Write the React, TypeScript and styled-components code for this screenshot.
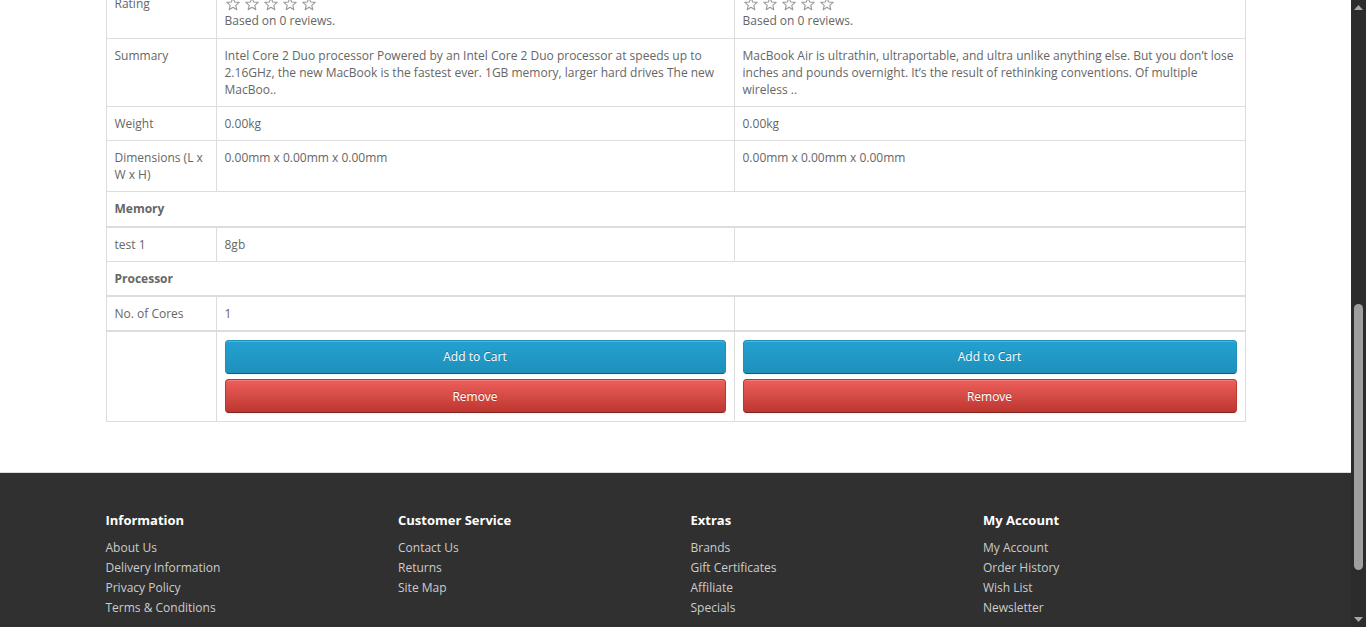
import React, { useLayoutEffect, useRef, useState } from 'react';
import styled, { createGlobalStyle, css } from 'styled-components';

const GlobalStyle = createGlobalStyle`
  html, body { margin: 0; padding: 0; overflow: hidden; }
  *, *::before, *::after { box-sizing: border-box; }
  body {
    font-family: 'Open Sans', 'Noto Sans', sans-serif;
    font-size: 12px;
    line-height: 1.42857143;
    color: #666;
    background: #fff;
  }
`;

const SUMMARY_ROW_TOP = 38;

const Screen = styled.div`
  display: flex;
  width: 100%;
  height: 627px;
  overflow: hidden;
`;

const Viewport = styled.div`
  flex: 1;
  min-width: 0;
  height: 100%;
  overflow: hidden;
`;

const Scrollbar = styled.div`
  flex: none;
  width: 15px;
  display: flex;
  flex-direction: column;
  background: #2c2c2c;
`;

const ScrollArrow = styled.div`
  flex: none;
  height: 15px;
  display: flex;
  align-items: center;
  justify-content: center;
`;

const ScrollTrack = styled.div`
  flex: 1;
  min-height: 0;
`;

const ScrollThumb = styled.div`
  margin-left: 3px;
  width: 9px;
  border-radius: 5px;
  background: #9f9f9f;
`;

const Container = styled.div`
  width: 1170px;
  padding: 0 15px;
  margin: 0 auto;
`;

const ContentContainer = styled(Container)`
  display: flow-root;
`;

/* ---------- header part (scrolled out of view) ---------- */

const TopNav = styled.nav`
  height: 40px;
  margin-bottom: 20px;
  background: #eee;
  border-bottom: 1px solid #e2e2e2;
`;

const TopNavInner = styled(Container)`
  display: flex;
  justify-content: flex-end;
  align-items: center;
  height: 100%;
  gap: 16px;
  color: #888;
`;

const SiteHeader = styled.header`
  height: 124px;
`;

const HeaderInner = styled(Container)`
  display: flex;
  align-items: center;
  justify-content: space-between;
  height: 100%;
  gap: 30px;
`;

const Logo = styled.div`
  font-size: 30px;
  font-weight: 700;
  color: #229ac8;
`;

const Search = styled.div`
  flex: 1;
  height: 40px;
  border: 1px solid #ccc;
  border-radius: 4px;
  padding: 10px 16px;
  color: #999;
  font-size: 14px;
`;

const CartButton = styled.div`
  height: 40px;
  padding: 10px 16px;
  border-radius: 4px;
  background: #363636;
  color: #fff;
`;

const Menu = styled.nav`
  height: 40px;
  margin-bottom: 20px;
  border-radius: 4px;
  background: linear-gradient(to bottom, #23a1d1, #1f90bb);
  display: flex;
  align-items: center;
  gap: 22px;
  padding: 0 15px;
  color: #fff;
  font-weight: 700;
`;

const Breadcrumb = styled.ul`
  list-style: none;
  margin: 0 0 20px;
  padding: 8px 15px;
  border: 1px solid #ddd;
  background: #f5f5f5;
  border-radius: 4px;
  display: flex;
  gap: 18px;
  & a { color: #23a1d1; text-decoration: none; }
`;

const PageTitle = styled.h1`
  margin: 0 0 10px;
  font-size: 33px;
  font-weight: 400;
  line-height: 1.1;
  color: #444;
`;

/* ---------- compare table ---------- */

const CompareTable = styled.table`
  width: 100%;
  table-layout: fixed;
  border-collapse: collapse;
  border-spacing: 0;
  margin-bottom: 20px;
  border: 1px solid #ddd;
`;

const Col = styled.col<{ $w?: number }>`
  ${p => p.$w && css`width: ${p.$w}px;`}
`;

const RowGroup = styled.tbody<{ $separated?: boolean }>`
  ${p => p.$separated && css`border-top: 2px solid #ddd;`}
`;

const Row = styled.tr``;

const Cell = styled.td<{ $group?: boolean }>`
  padding: 8px;
  vertical-align: top;
  border: 1px solid #ddd;
  line-height: 1.42857143;
  ${p => p.$group && css`border-bottom-width: 2px;`}
`;

const ProductLink = styled.a`
  color: #23a1d1;
  font-weight: 700;
  text-decoration: none;
`;

const Thumbnail = styled.div`
  width: 100px;
  height: 100px;
  padding: 4px;
  border: 1px solid #ddd;
  border-radius: 4px;
  background: #fff;
`;

const ThumbInner = styled.div`
  width: 100%;
  height: 100%;
  background: #f2f2f2;
`;

const StarsLine = styled.div`
  display: flex;
  align-items: center;
  gap: 3px;
  height: 17.14px;
`;

const StarSlot = styled.span`
  width: 16px;
  display: flex;
  justify-content: center;
`;

const Button = styled.button<{ $variant: 'primary' | 'danger' }>`
  display: block;
  width: 100%;
  margin: 0;
  padding: 7.5px 12px;
  font-family: inherit;
  font-size: 12px;
  line-height: 1.42857143;
  color: #fff;
  text-align: center;
  text-decoration: none;
  border: 1px solid;
  border-radius: 4px;
  text-shadow: 0 -1px 0 rgba(0, 0, 0, 0.25);
  box-shadow: inset 0 1px 0 rgba(255, 255, 255, 0.2), 0 1px 2px rgba(0, 0, 0, 0.05);
  cursor: pointer;
  & + & { margin-top: 5px; }
  ${p =>
    p.$variant === 'primary'
      ? css`
          background-color: #229ac8;
          background-image: linear-gradient(to bottom, #23a1d1, #1f90bb);
          border-color: #1f90bb #1f90bb #145e7a;
        `
      : css`
          background-color: #da4f49;
          background-image: linear-gradient(to bottom, #ee5f5b, #bd362f);
          border-color: #bd362f #bd362f #802420;
        `}
`;

/* ---------- footer ---------- */

const Footer = styled.footer`
  margin-top: 30px;
  padding-top: 30px;
  padding-bottom: 31px;
  background: #303030;
  border-top: 1px solid #ddd;
  color: #e2e2e2;
`;

const FooterGrid = styled.div`
  display: grid;
  grid-template-columns: repeat(4, 1fr);
  margin: 0 -15px;
`;

const FooterColumn = styled.div`
  padding: 0 15px;
`;

const FooterHeading = styled.h5`
  margin: 10px 0;
  font-size: 13px;
  font-weight: 700;
  line-height: 1.1;
  color: #fff;
`;

const LinkList = styled.ul`
  list-style: none;
  margin: 0 0 10px;
  padding: 0;
`;

const LinkItem = styled.li`
  line-height: 20px;
`;

const FooterLink = styled.a`
  color: #ccc;
  text-decoration: none;
`;

const FooterRule = styled.hr`
  margin: 20px 0;
  border: none;
  border-bottom: 1px solid #666;
`;

const Powered = styled.p`
  margin: 0 0 10px;
  color: #ccc;
`;

const Star = () => (
  <svg width="14" height="14" viewBox="0 0 14 14" aria-hidden="true">
    <polygon
      points="7,0.9 8.7,5.05 13.18,5.39 9.76,8.3 10.82,12.66 7,10.3 3.18,12.66 4.24,8.3 0.82,5.39 5.3,5.05"
      fill="none"
      stroke="#999"
      strokeWidth="1.1"
      strokeLinejoin="round"
    />
  </svg>
);

const Rating = () => (
  <>
    <StarsLine>
      {[0, 1, 2, 3, 4].map(i => (
        <StarSlot key={i}>
          <Star />
        </StarSlot>
      ))}
    </StarsLine>
    Based on 0 reviews.
  </>
);

const Arrow = ({ dir }: { dir: 'up' | 'down' }) => (
  <svg width="9" height="5" viewBox="0 0 9 5" aria-hidden="true">
    <polygon points={dir === 'up' ? '4.5,0 9,5 0,5' : '0,0 9,0 4.5,5'} fill="#a6a6a6" />
  </svg>
);

const products = [
  {
    name: 'MacBook',
    price: '$602.00',
    model: 'Product 16',
    brand: 'Apple',
    availability: 'Out Of Stock',
    summary:
      'Intel Core 2 Duo processor Powered by an Intel Core 2 Duo processor at speeds up to 2.16GHz, the new MacBook is the fastest ever. 1GB memory, larger hard drives The new MacBoo..',
    memory: '8gb',
    cores: '1',
  },
  {
    name: 'MacBook Air',
    price: '$1,202.00',
    model: 'Product 17',
    brand: 'Apple',
    availability: 'In Stock',
    summary:
      'MacBook Air is ultrathin, ultraportable, and ultra unlike anything else. But you don\u2019t lose inches and pounds overnight. It\u2019s the result of rethinking conventions. Of multiple wireless ..',
    memory: '',
    cores: '',
  },
];

const footerColumns = [
  { title: 'Information', links: ['About Us', 'Delivery Information', 'Privacy Policy', 'Terms & Conditions'] },
  { title: 'Customer Service', links: ['Contact Us', 'Returns', 'Site Map'] },
  { title: 'Extras', links: ['Brands', 'Gift Certificates', 'Affiliate', 'Specials'] },
  { title: 'My Account', links: ['My Account', 'Order History', 'Wish List', 'Newsletter'] },
];

const menuItems = ['Desktops', 'Laptops & Notebooks', 'Components', 'Tablets', 'Software', 'Phones & PDAs', 'Cameras', 'MP3 Players'];

export default function App() {
  const viewportRef = useRef<HTMLDivElement>(null);
  const anchorRef = useRef<HTMLTableRowElement>(null);
  const [thumb, setThumb] = useState({ top: 0, height: 0 });

  useLayoutEffect(() => {
    const place = () => {
      const vp = viewportRef.current;
      const anchor = anchorRef.current;
      if (!vp || !anchor) return;
      const offset = anchor.getBoundingClientRect().top - vp.getBoundingClientRect().top + vp.scrollTop;
      vp.scrollTop = offset - SUMMARY_ROW_TOP;
      const track = vp.clientHeight - 30;
      setThumb({
        top: (vp.scrollTop / vp.scrollHeight) * track,
        height: (vp.clientHeight / vp.scrollHeight) * track,
      });
    };
    place();
    if (document.fonts && document.fonts.ready) document.fonts.ready.then(place);
  }, []);

  return (
    <>
      <GlobalStyle />
      <Screen>
        <Viewport ref={viewportRef}>
          <TopNav>
            <TopNavInner>
              <span>123456789</span>
              <span>My Account</span>
              <span>Wish List (0)</span>
              <span>Shopping Cart</span>
              <span>Checkout</span>
            </TopNavInner>
          </TopNav>
          <SiteHeader>
            <HeaderInner>
              <Logo>Your Store</Logo>
              <Search>Search</Search>
              <CartButton>0 item(s) - $0.00</CartButton>
            </HeaderInner>
          </SiteHeader>
          <ContentContainer>
            <Menu>
              {menuItems.map(m => (
                <span key={m}>{m}</span>
              ))}
            </Menu>
            <Breadcrumb>
              <li><a href="#">Home</a></li>
              <li><a href="#">Product Comparison</a></li>
            </Breadcrumb>
            <PageTitle>Product Comparison</PageTitle>
            <CompareTable>
              <colgroup>
                <Col $w={110} />
                <Col $w={518} />
                <Col />
              </colgroup>
              <RowGroup>
                <Row>
                  <Cell colSpan={3} $group>
                    <strong>Product Details</strong>
                  </Cell>
                </Row>
              </RowGroup>
              <RowGroup>
                <Row>
                  <Cell>Product</Cell>
                  {products.map(p => (
                    <Cell key={p.name}>
                      <ProductLink href="#">{p.name}</ProductLink>
                    </Cell>
                  ))}
                </Row>
                <Row>
                  <Cell>Image</Cell>
                  {products.map(p => (
                    <Cell key={p.name}>
                      <Thumbnail>
                        <ThumbInner />
                      </Thumbnail>
                    </Cell>
                  ))}
                </Row>
                <Row>
                  <Cell>Price</Cell>
                  {products.map(p => (
                    <Cell key={p.name}>{p.price}</Cell>
                  ))}
                </Row>
                <Row>
                  <Cell>Model</Cell>
                  {products.map(p => (
                    <Cell key={p.name}>{p.model}</Cell>
                  ))}
                </Row>
                <Row>
                  <Cell>Brand</Cell>
                  {products.map(p => (
                    <Cell key={p.name}>{p.brand}</Cell>
                  ))}
                </Row>
                <Row>
                  <Cell>Availability</Cell>
                  {products.map(p => (
                    <Cell key={p.name}>{p.availability}</Cell>
                  ))}
                </Row>
                <Row>
                  <Cell>Rating</Cell>
                  {products.map(p => (
                    <Cell key={p.name}>
                      <Rating />
                    </Cell>
                  ))}
                </Row>
                <Row ref={anchorRef}>
                  <Cell>Summary</Cell>
                  {products.map(p => (
                    <Cell key={p.name}>{p.summary}</Cell>
                  ))}
                </Row>
                <Row>
                  <Cell>Weight</Cell>
                  {products.map(p => (
                    <Cell key={p.name}>0.00kg</Cell>
                  ))}
                </Row>
                <Row>
                  <Cell>Dimensions (L x W x H)</Cell>
                  {products.map(p => (
                    <Cell key={p.name}>0.00mm x 0.00mm x 0.00mm</Cell>
                  ))}
                </Row>
              </RowGroup>
              <RowGroup>
                <Row>
                  <Cell colSpan={3} $group>
                    <strong>Memory</strong>
                  </Cell>
                </Row>
              </RowGroup>
              <RowGroup>
                <Row>
                  <Cell>test 1</Cell>
                  {products.map(p => (
                    <Cell key={p.name}>{p.memory}</Cell>
                  ))}
                </Row>
              </RowGroup>
              <RowGroup>
                <Row>
                  <Cell colSpan={3} $group>
                    <strong>Processor</strong>
                  </Cell>
                </Row>
              </RowGroup>
              <RowGroup>
                <Row>
                  <Cell>No. of Cores</Cell>
                  {products.map(p => (
                    <Cell key={p.name}>{p.cores}</Cell>
                  ))}
                </Row>
              </RowGroup>
              <RowGroup $separated>
                <Row>
                  <Cell />
                  {products.map(p => (
                    <Cell key={p.name}>
                      <Button type="button" $variant="primary">
                        Add to Cart
                      </Button>
                      <Button as="a" href="#" $variant="danger">
                        Remove
                      </Button>
                    </Cell>
                  ))}
                </Row>
              </RowGroup>
            </CompareTable>
          </ContentContainer>
          <Footer>
            <Container>
              <FooterGrid>
                {footerColumns.map(col => (
                  <FooterColumn key={col.title}>
                    <FooterHeading>{col.title}</FooterHeading>
                    <LinkList>
                      {col.links.map(l => (
                        <LinkItem key={l}>
                          <FooterLink href="#">{l}</FooterLink>
                        </LinkItem>
                      ))}
                    </LinkList>
                  </FooterColumn>
                ))}
              </FooterGrid>
              <FooterRule />
              <Powered>Powered By OpenCart Your Store © 2024</Powered>
            </Container>
          </Footer>
        </Viewport>
        <Scrollbar>
          <ScrollArrow>
            <Arrow dir="up" />
          </ScrollArrow>
          <ScrollTrack>
            <ScrollThumb style={{ marginTop: thumb.top, height: thumb.height }} />
          </ScrollTrack>
          <ScrollArrow>
            <Arrow dir="down" />
          </ScrollArrow>
        </Scrollbar>
      </Screen>
    </>
  );
}
